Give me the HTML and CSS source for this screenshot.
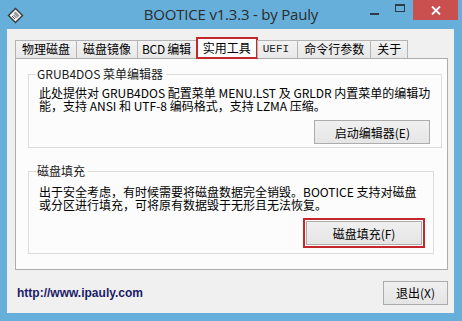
FILE: index.html
```html
<!DOCTYPE html>
<html lang="zh">
<head>
    <meta charset="UTF-8">
    <title>BOOTICE v1.3.3 - by Pauly</title>
    <link rel="stylesheet" href="styles.css">
</head>
<body>
    <div class="window">
        <div class="titlebar">
            <div class="title-left">
                <svg class="app-icon" width="17" height="17" viewBox="0 0 17 17">
                    <polygon points="8.5,0.5 16.5,8.5 8.5,16.5 0.5,8.5" fill="#3a3a3a"/>
                    <polygon points="8.5,2.5 14.5,8.5 8.5,14.5 2.5,8.5" fill="#f4f4f4"/>
                    <polygon points="8.5,4.5 12.5,8.5 10.5,10.5 6.5,6.5" fill="#9a9a9a"/>
                    <line x1="5" y1="9" x2="8" y2="12" stroke="#555" stroke-width="1"/>
                    <line x1="6.5" y1="8" x2="9.5" y2="11" stroke="#555" stroke-width="1"/>
                </svg>
            </div>
            <div class="title-text">BOOTICE v1.3.3 - by Pauly</div>
            <div class="caption-buttons">
                <div class="cap-btn"><span class="cap-min"></span></div>
                <div class="cap-btn"><span class="cap-max"></span></div>
                <div class="cap-btn cap-close">
                    <svg width="10" height="9" viewBox="0 0 10 9">
                        <line x1="1" y1="0.5" x2="9" y2="8.5" stroke="#fff" stroke-width="1.8"/>
                        <line x1="9" y1="0.5" x2="1" y2="8.5" stroke="#fff" stroke-width="1.8"/>
                    </svg>
                </div>
            </div>
        </div>

        <div class="client">
            <div class="tabs">
                <div class="tab">物理磁盘</div>
                <div class="tab">磁盘镜像</div>
                <div class="tab tab-bcd">BCD 编辑</div>
                <div class="tab tab-active">实用工具</div>
                <div class="tab tab-uefi">UEFI</div>
                <div class="tab">命令行参数</div>
                <div class="tab">关于</div>
            </div>

            <div class="panel">
                <fieldset class="group group-grub">
                    <legend>GRUB4DOS 菜单编辑器</legend>
                    <p class="group-desc">此处提供对 GRUB4DOS 配置菜单 MENU.LST 及 GRLDR 内置菜单的编辑功<br>能，支持 ANSI 和 UTF-8 编码格式，支持 LZMA 压缩。</p>
                    <div class="group-actions">
                        <button class="win-button">启动编辑器(E)</button>
                    </div>
                </fieldset>

                <fieldset class="group group-fill">
                    <legend>磁盘填充</legend>
                    <p class="group-desc">出于安全考虑，有时候需要将磁盘数据完全销毁。BOOTICE 支持对磁盘<br>或分区进行填充，可将原有数据毁于无形且无法恢复。</p>
                    <div class="group-actions">
                        <button class="win-button marked">磁盘填充(F)</button>
                    </div>
                </fieldset>
            </div>

            <div class="footer">
                <span class="site-link">http://www.ipauly.com</span>
                <button class="win-button exit-button">退出(X)</button>
            </div>
        </div>
    </div>
</body>
</html>
```

FILE: styles.css
```css
* {
    margin: 0;
    padding: 0;
    box-sizing: border-box;
}

body {
    background: #ffffff;
    font-family: "Noto Sans CJK SC", "Noto Sans", sans-serif;
    font-size: 12px;
    color: #000;
}

.window {
    width: 462px;
    height: 321px;
    background: #67afdb;
    display: flex;
    flex-direction: column;
    padding: 0 8px 8px 7px;
}

/* 标题栏 */
.titlebar {
    height: 29px;
    display: grid;
    grid-template-columns: 1fr auto 1fr;
    margin: 0 -8px 0 -7px;
}

.title-left {
    padding: 7px 0 0 7px;
}

.app-icon {
    display: block;
}

.title-text {
    font-family: "Open Sans", "Noto Sans", sans-serif;
    font-size: 15px;
    color: #2b2b2b;
    line-height: 29px;
    letter-spacing: -0.2px;
}

.caption-buttons {
    display: flex;
    justify-content: flex-end;
    padding-right: 4px;
}

.cap-btn {
    width: 26px;
    height: 20px;
    display: flex;
    align-items: center;
    justify-content: center;
}

.cap-min {
    width: 9px;
    height: 2px;
    background: #2e3a48;
    margin-top: 8px;
}

.cap-max {
    width: 10px;
    height: 8px;
    border: 1px solid #2e3a48;
    border-top-width: 2px;
    margin-top: -4px;
}

.cap-close {
    width: 45px;
    background: #c9504f;
}

/* 客户区 */
.client {
    flex: 1;
    background: #f0f0f0;
    display: flex;
    flex-direction: column;
    padding: 11px 6px 0 8px;
}

.tabs {
    display: flex;
    height: 18px;
    align-items: flex-end;
    position: relative;
    z-index: 1;
}

.tab {
    height: 18px;
    line-height: 16px;
    padding: 0 6px;
    border: 1px solid #b4b4b4;
    border-bottom: none;
    margin-right: -1px;
    background: linear-gradient(#f2f2f2, #e8e8e8);
}

.tab-bcd {
    padding: 0 5px 0 4px;
    letter-spacing: -0.3px;
}

.tab-uefi {
    font-family: "Liberation Mono", monospace;
    font-size: 11px;
    padding: 0 8px 0 5px;
    color: #222;
}

.tab-active {
    height: 22px;
    line-height: 18px;
    margin-bottom: -1px;
    background: #fcfcfc;
    border: 2px solid #c4262b;
    border-bottom: 2px solid #c4262b;
    padding: 0 5px;
}

.panel {
    height: 212px;
    background: #fcfcfc;
    border: 1px solid #adadad;
    padding: 9px 13px 0 12px;
    display: flex;
    flex-direction: column;
    gap: 17px;
}

/* 分组框 */
.group {
    border: 1px solid #dcdcdc;
    padding: 0 11px 0 10px;
}

.group legend {
    margin-left: -3px;
    padding: 0 3px 0 1px;
    line-height: 12px;
    color: #1a1a1a;
}

.group-grub {
    height: 80px;
}

.group-fill {
    height: 89px;
}

.group-desc {
    line-height: 13px;
    margin-top: 6px;
    white-space: nowrap;
}

.group-fill .group-desc {
    margin-top: 8px;
}

.group-actions {
    display: flex;
    justify-content: flex-end;
    margin-top: 8px;
}

.group-fill .group-actions {
    margin-top: 10px;
}

.win-button {
    font-family: "Noto Sans CJK SC", "Noto Sans", sans-serif;
    font-size: 12px;
    color: #000;
    width: 116px;
    height: 24px;
    border: 1px solid #acacac;
    background: linear-gradient(#f0f0f0, #e5e5e5);
}

.marked {
    outline: 2px solid #c4262b;
    outline-offset: 1px;
}

/* 底部 */
.footer {
    flex: 1;
    display: flex;
    justify-content: space-between;
    align-items: center;
    padding: 2px 0 0 2px;
}

.site-link {
    font-family: "Liberation Sans", Arial, sans-serif;
    font-weight: bold;
    font-size: 12px;
    color: #1b1b68;
}

.exit-button {
    width: 65px;
}
```
